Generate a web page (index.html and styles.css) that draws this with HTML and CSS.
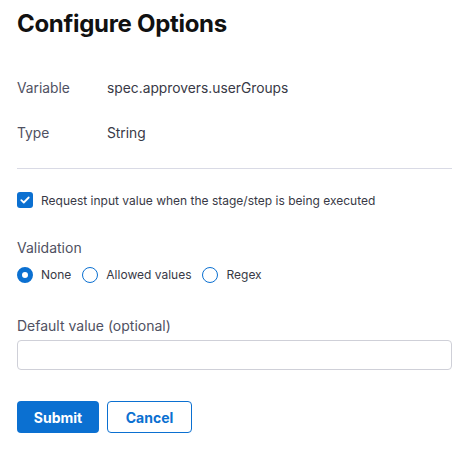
FILE: index.html
```html
<!DOCTYPE html>
<html>
<head>
<meta charset="utf-8">
<link rel="stylesheet" href="styles.css">
</head>
<body>
<div class="dialog">
  <h1 class="title">Configure Options</h1>
  <div class="info">
    <div class="info-row"><span class="info-label">Variable</span><span class="info-value">spec.approvers.userGroups</span></div>
    <div class="info-row"><span class="info-label">Type</span><span class="info-value">String</span></div>
  </div>
  <div class="divider"></div>
  <label class="check">
    <span class="checkbox"><svg width="10" height="8" viewBox="0 0 10 8"><path d="M1.3 4.2 L3.8 6.5 L8.7 1.5" fill="none" stroke="#fff" stroke-width="1.8" stroke-linecap="round" stroke-linejoin="round"/></svg></span>
    <span class="check-text">Request input value when the stage/step is being executed</span>
  </label>
  <div class="section validation">
    <div class="field-label">Validation</div>
    <div class="radios">
      <span class="radio-item"><span class="radio checked"></span>None</span>
      <span class="radio-item"><span class="radio"></span>Allowed values</span>
      <span class="radio-item"><span class="radio"></span>Regex</span>
    </div>
  </div>
  <div class="section default">
    <div class="field-label">Default value (optional)</div>
    <div class="input"></div>
  </div>
  <div class="actions">
    <button class="btn primary">Submit</button>
    <button class="btn secondary">Cancel</button>
  </div>
</div>
</body>
</html>
```
FILE: styles.css
```css
html, body { margin: 0; padding: 0; background: #fff; }
body { font-family: Inter, "Noto Sans", sans-serif; color: #22222a; }
.dialog { padding: 0 19px 0 17px; }
.title { margin: 0; padding-top: 9px; font-size: 24px; font-weight: 700; line-height: 30px; color: #111; letter-spacing: -0.3px; }
.info { margin-top: 39px; display: flex; flex-direction: column; gap: 25px; }
.info-row { display: flex; font-size: 13.8px; line-height: 20px; }
.info-label { width: 90px; color: #4f5162; }
.info-value { color: #383946; }
.divider { margin-top: 25px; height: 1px; background: #d9dae5; }
.check { margin-top: 23px; display: flex; align-items: center; gap: 8px; font-size: 12px; color: #383946; }
.checkbox { width: 16px; height: 16px; border-radius: 3px; background: #0b70d1; display: flex; align-items: center; justify-content: center; }
.section { display: flex; flex-direction: column; }
.validation { margin-top: 30px; }
.field-label { font-size: 14px; line-height: 20px; color: #4f5162; }
.radios { margin-top: 8px; display: flex; gap: 11px; font-size: 12px; color: #383946; }
.radio-item { display: flex; align-items: center; gap: 8px; line-height: 18px; }
.radio { width: 16px; height: 16px; box-sizing: border-box; border: 1.5px solid #0b70d1; border-radius: 50%; }
.radio.checked { border: 5px solid #0b70d1; }
.default { margin-top: 32px; }
.default .input { margin-top: 4px; height: 30px; box-sizing: border-box; border: 1px solid #cfd0d8; border-radius: 4px; }
.actions { margin-top: 31px; display: flex; gap: 8px; }
.btn { height: 32px; box-sizing: border-box; border-radius: 4px; font-family: Inter, sans-serif; font-size: 14px; font-weight: 700; padding: 0; }
.primary { width: 82px; background: #0b70d1; color: #fff; border: none; }
.secondary { width: 85px; background: #fff; color: #0b70d1; border: 1px solid #0b70d1; }
```
